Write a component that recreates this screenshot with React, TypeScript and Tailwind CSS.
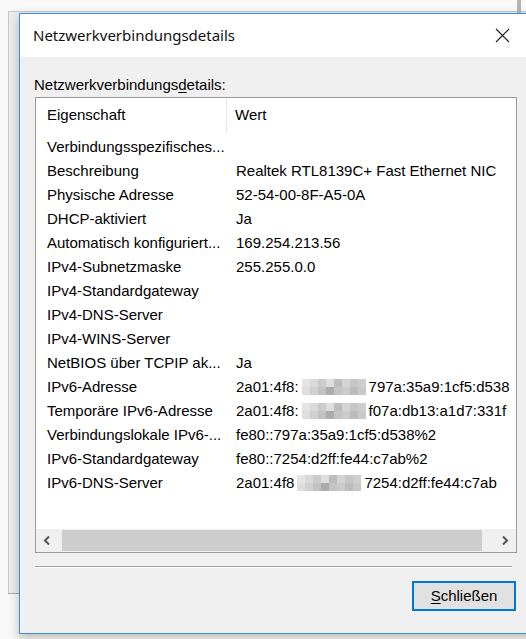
import React from 'react';

type Row = { name: string; value?: string; masked?: { head: string; tail: string } };

const ROWS: Row[] = [
  { name: 'Verbindungsspezifisches...' },
  { name: 'Beschreibung', value: 'Realtek RTL8139C+ Fast Ethernet NIC' },
  { name: 'Physische Adresse', value: '52-54-00-8F-A5-0A' },
  { name: 'DHCP-aktiviert', value: 'Ja' },
  { name: 'Automatisch konfiguriert...', value: '169.254.213.56' },
  { name: 'IPv4-Subnetzmaske', value: '255.255.0.0' },
  { name: 'IPv4-Standardgateway' },
  { name: 'IPv4-DNS-Server' },
  { name: 'IPv4-WINS-Server' },
  { name: 'NetBIOS über TCPIP ak...', value: 'Ja' },
  { name: 'IPv6-Adresse', masked: { head: '2a01:4f8:', tail: '797a:35a9:1cf5:d538' } },
  { name: 'Temporäre IPv6-Adresse', masked: { head: '2a01:4f8:', tail: 'f07a:db13:a1d7:331f' } },
  { name: 'Verbindungslokale IPv6-...', value: 'fe80::797a:35a9:1cf5:d538%2' },
  { name: 'IPv6-Standardgateway', value: 'fe80::7254:d2ff:fe44:c7ab%2' },
  { name: 'IPv6-DNS-Server', masked: { head: '2a01:4f8', tail: '7254:d2ff:fe44:c7ab' } },
];

// pixelated block hiding part of an address
const MOSAIC = [
  ['#e4e4e4', '#d9d9d9', '#cbcbcb', '#dedede', '#bdbdbd', '#d3d3d3', '#c6c6c6', '#cecece'],
  ['#dedede', '#d0d0d0', '#c2c2c2', '#ababab', '#c4c4c4', '#cbcbcb', '#bcbcbc', '#c8c8c8'],
];

const Mosaic: React.FC = () => (
  <span className="inline-flex flex-col mx-[3px] align-middle">
    {MOSAIC.map((line, i) => (
      <span key={i} className="flex">
        {line.map((c, j) => (
          <span key={j} className="w-[8px] h-[8px]" style={{ background: c }} />
        ))}
      </span>
    ))}
  </span>
);

const Chevron: React.FC<{ dir: 'left' | 'right' }> = ({ dir }) => (
  <svg width="8" height="9" viewBox="0 0 8 9">
    <path
      d={dir === 'left' ? 'M6 0.5 L2 4.5 L6 8.5' : 'M2 0.5 L6 4.5 L2 8.5'}
      fill="none"
      stroke="#555"
      strokeWidth="2"
    />
  </svg>
);

const App: React.FC = () => {
  return (
    <div className="relative w-[526px] h-[639px] overflow-hidden bg-[#f8f8f8] font-['Liberation_Sans',Arial,sans-serif] text-black">
      {/* window behind the dialog */}
      <div className="absolute left-[8px] top-[11px] w-[520px] h-[583px] bg-[#ececec] border-t border-l border-b border-[#c8c8c8] border-b-[#a8a8a8]" />
      <div className="absolute left-[517px] top-0 w-[4px] h-[13px] bg-[#b4b4b4]" />

      {/* dialog */}
      <div className="absolute left-[19px] top-[13px] w-[520px] h-[621px] border border-[#3c8fdc] bg-[#f0f0f0] shadow-[0_4px_10px_rgba(0,0,0,0.25)] flex flex-col">
        <div className="h-[43px] bg-white flex items-center pl-[13px] pr-[12px] shrink-0">
          <span className="font-['Noto_Sans',sans-serif] text-[15px] text-[#111]">Netzwerkverbindungsdetails</span>
          <svg className="ml-auto mr-[16px]" width="15" height="15" viewBox="0 0 15 15">
            <path d="M1 1 L14 14 M14 1 L1 14" stroke="#222" strokeWidth="1.1" />
          </svg>
        </div>

        <div className="flex flex-col pl-[14px] pt-[19px]">
          <div className="text-[15px] leading-[18px]">
            Netzwerkverbindungs<span className="underline underline-offset-2">d</span>etails:
          </div>

          <div className="mt-[3px] ml-[1px] w-[482px] h-[456px] border border-[#9a9a9a] bg-white flex flex-col overflow-hidden">
            <div className="h-[35px] flex items-stretch text-[15px] shrink-0">
              <div className="w-[191px] pl-[11px] flex items-center border-r border-[#e5e5e5]">Eigenschaft</div>
              <div className="pl-[8px] flex items-center">Wert</div>
            </div>

            <div className="pt-[2px] flex flex-col text-[15px] flex-1">
              {ROWS.map((r) => (
                <div key={r.name} className="h-[24px] flex items-center whitespace-nowrap">
                  <div className="w-[192px] pl-[11px] shrink-0 overflow-hidden">{r.name}</div>
                  <div className="pl-[8px] flex items-center">
                    {r.value}
                    {r.masked && (
                      <>
                        {r.masked.head}
                        <Mosaic />
                        {r.masked.tail}
                      </>
                    )}
                  </div>
                </div>
              ))}
            </div>

            {/* horizontal scrollbar */}
            <div className="h-[23px] bg-[#f0f0f0] flex items-center shrink-0">
              <div className="w-[22px] flex justify-center">
                <Chevron dir="left" />
              </div>
              <div className="flex-1 h-full flex items-center pl-[4px] pr-[12px]">
                <div className="w-full h-[21px] bg-[#cdcdcd]" />
              </div>
              <div className="w-[22px] flex justify-center">
                <Chevron dir="right" />
              </div>
            </div>
          </div>

          <div className="mt-[13px] ml-[1px] w-[477px] h-[2px] border-t border-[#a0a0a0] border-b border-b-white" />

          <div className="mt-[13px] ml-[378px] w-[104px] h-[30px] border-2 border-[#0078d7] bg-[#e1e1e1] flex items-center justify-center text-[15px]">
            <span>
              <span className="underline underline-offset-2">S</span>chließen
            </span>
          </div>
        </div>
      </div>
    </div>
  );
};

export default App;
